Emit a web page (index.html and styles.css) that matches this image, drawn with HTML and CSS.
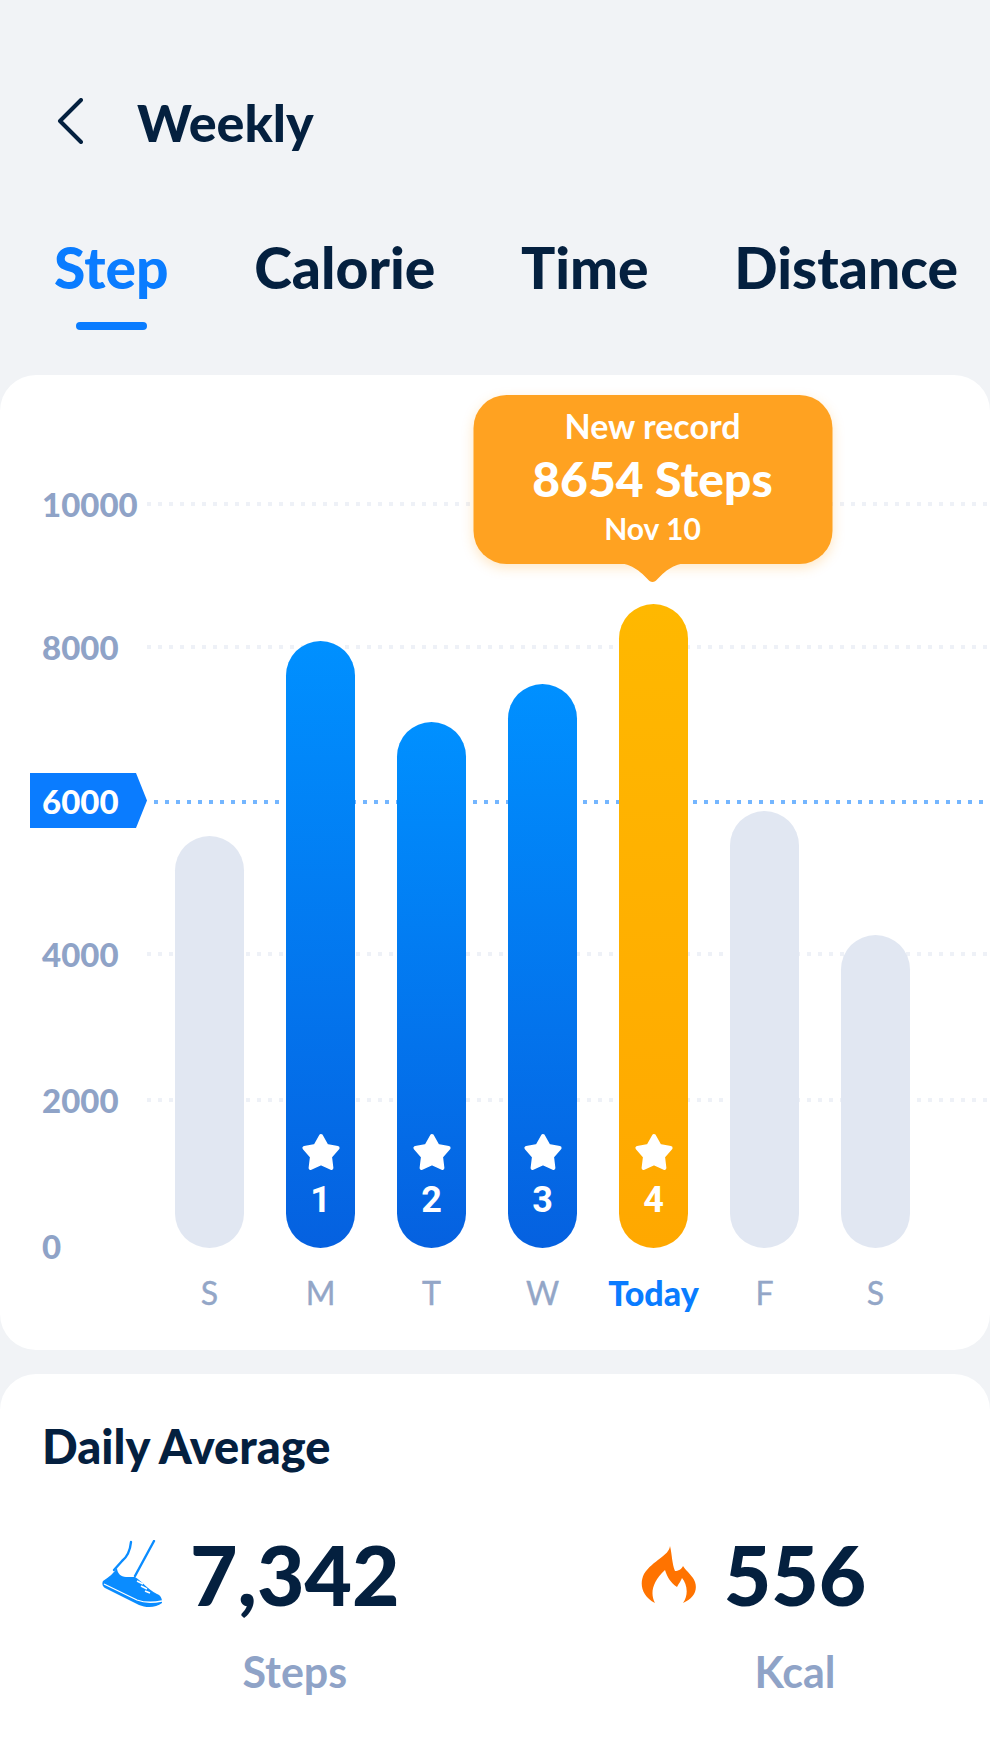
FILE: index.html
```html
<!DOCTYPE html>
<html lang="en">

<head>
    <meta charset="UTF-8">
    <title>Weekly</title>
    <link rel="stylesheet" href="styles.css">
</head>

<body>
    <div class="page">
        <div class="header">
            <svg class="back" width="26" height="46" viewBox="0 0 26 46">
                <path d="M24 2 L3 23 L24 44" fill="none" stroke="#04203f" stroke-width="4" stroke-linecap="round" stroke-linejoin="round"/>
            </svg>
            <h1>Weekly</h1>
        </div>

        <div class="tabs">
            <div class="tab active">Step<span class="tab-line"></span></div>
            <div class="tab">Calorie</div>
            <div class="tab">Time</div>
            <div class="tab">Distance</div>
        </div>

        <div class="card chart">
            <!-- grid lines sit behind the bars -->
            <div class="axis">
                <div class="tick"><span class="tick-label">10000</span><span class="tick-line"></span></div>
                <div class="tick"><span class="tick-label">8000</span><span class="tick-line"></span></div>
                <div class="tick goal"><span class="tick-label">6000</span><span class="tick-line"></span></div>
                <div class="tick"><span class="tick-label">4000</span><span class="tick-line"></span></div>
                <div class="tick"><span class="tick-label">2000</span><span class="tick-line"></span></div>
                <div class="tick"><span class="tick-label">0</span></div>
            </div>

            <div class="bars">
                <div class="bar" style="height: 412px"></div>
                <div class="bar blue" style="height: 607px">
                    <svg class="star" viewBox="0 0 40 38"><use href="#star"/></svg>
                    <span class="bar-num">1</span>
                </div>
                <div class="bar blue" style="height: 526px">
                    <svg class="star" viewBox="0 0 40 38"><use href="#star"/></svg>
                    <span class="bar-num">2</span>
                </div>
                <div class="bar blue" style="height: 564px">
                    <svg class="star" viewBox="0 0 40 38"><use href="#star"/></svg>
                    <span class="bar-num">3</span>
                </div>
                <div class="bar orange" style="height: 644px">
                    <div class="record">
                        <div class="record-title">New record</div>
                        <div class="record-value">8654 Steps</div>
                        <div class="record-date">Nov 10</div>
                        <svg class="record-tip" width="56" height="20" viewBox="0 0 56 20">
                            <path d="M0 0 H56 C48 2 44 5 38 10 L33 15 C30 19 26 19 23 15 L18 10 C12 5 8 2 0 0 Z" fill="#ffa221"/>
                        </svg>
                    </div>
                    <svg class="star" viewBox="0 0 40 38"><use href="#star"/></svg>
                    <span class="bar-num">4</span>
                </div>
                <div class="bar" style="height: 437px"></div>
                <div class="bar" style="height: 313px"></div>
            </div>

            <div class="days">
                <span>S</span>
                <span>M</span>
                <span>T</span>
                <span>W</span>
                <span class="today">Today</span>
                <span>F</span>
                <span>S</span>
            </div>
        </div>

        <div class="card average">
            <h2>Daily Average</h2>
            <div class="stats">
                <div class="stat">
                    <svg class="stat-icon" width="60" height="68" viewBox="0 0 60 68">
                        <path d="M29 2 C28 12 25 17 20 21 L12 30" fill="none" stroke="#0a8cff" stroke-width="2.4" stroke-linecap="round"/>
                        <path d="M52 1 L33 36" fill="none" stroke="#0a8cff" stroke-width="2.4" stroke-linecap="round"/>
                        <path d="M15 28 C15 33 19 37 24 37 L33 37 C40 41 45 49 55 54 C60 56 60 60 60 63 C54 68 44 68 37 65 L3 48 C0 46 0 43 1 41 C7 37 12 33 15 28 Z" fill="#0a8cff"/>
                        <path d="M2 44 L35 60 C43 63 50 63 60 61" fill="none" stroke="#fff" stroke-width="1.3"/>
                        <path d="M35 41 L41 44 M39 46 L45 49 M43 51 L48 53" fill="none" stroke="#fff" stroke-width="1.6"/>
                    </svg>
                    <div class="stat-value">7,342</div>
                    <div class="stat-label">Steps</div>
                </div>
                <div class="stat">
                    <svg class="stat-icon" width="55" height="57" viewBox="0 0 55 57">
                        <path d="M29 0 C28 10 12 14 3 28 C-2 38 1 50 14 57 C9 48 11 36 24 24 C26 31 30 37 36 41 C38 37 40 35 41 32 C46 38 48 48 42 57 C52 53 57 45 54 36 C52 30 46 26 42 20 C41 23 37 25 34 25 C31 18 31 8 29 0 Z" fill="#ff7300"/>
                    </svg>
                    <div class="stat-value">556</div>
                    <div class="stat-label">Kcal</div>
                </div>
            </div>
        </div>
    </div>

    <svg class="defs" width="0" height="0">
        <symbol id="star" viewBox="0 0 40 38">
            <polygon points="20,3 25.6,13 36.6,15 29,23.6 30.4,35 20,30.3 9.6,35 11,23.6 3.4,15 14.4,13" fill="#fff" stroke="#fff" stroke-width="4" stroke-linejoin="round"/>
        </symbol>
    </svg>
</body>

</html>
```

FILE: styles.css
```css
body {
    margin: 0;
    background: #f1f3f6;
    font-family: 'Lato', 'Noto Sans', sans-serif;
    color: #04203f;
}

.page {
    width: 990px;
    height: 1760px;
    overflow: hidden;
}

.defs {
    position: absolute;
}

/* top bar */
.header {
    display: flex;
    align-items: center;
    height: 62px;
    padding: 90px 0 0 57px;
}

.back {
    margin-right: 54px;
}

h1 {
    margin: 0;
    padding-top: 2px;
    font-size: 52px;
    line-height: 62px;
    font-weight: 900;
}

.tabs {
    display: flex;
    justify-content: space-between;
    align-items: flex-start;
    margin-top: 83px;
    padding: 0 32px 0 54px;
}

.tab {
    display: flex;
    flex-direction: column;
    align-items: center;
    font-size: 57px;
    line-height: 64px;
    font-weight: 900;
}

.tab.active {
    color: #0a7cff;
}

.tab-line {
    width: 71px;
    height: 8px;
    margin-top: 23px;
    border-radius: 4px;
    background: #0a7cff;
}

/* cards */
.card {
    position: relative;
    background: #fff;
    border-radius: 36px;
}

.chart {
    height: 975px;
    margin-top: 45px;
}

.axis {
    position: absolute;
    top: 129px;
    left: 0;
    right: 0;
    display: grid;
    grid-template-rows: 143px 155px 152px 146px 146px 0;
}

.tick {
    display: flex;
    align-items: center;
    height: 44px;
    margin-top: -22px;
    font-size: 33px;
    font-weight: 900;
    color: #8fa3c7;
}

.tick-label {
    flex: none;
    width: 105px;
    padding-left: 42px;
}

.tick-line {
    flex: 1;
    height: 4px;
    background-image: linear-gradient(90deg, #eef1f7 4px, transparent 4px);
    background-size: 11px 100%;
}

.goal {
    height: 56px;
    margin-top: -28px;
}

.goal .tick-label {
    display: flex;
    align-items: center;
    flex: none;
    height: 55px;
    margin-left: 30px;
    margin-bottom: 3px;
    padding: 0 0 0 12px;
    box-sizing: border-box;
    width: 117px;
    color: #fff;
    background: #0a7cff;
    clip-path: polygon(0 0, 106px 0, 100% 50%, 106px 100%, 0 100%);
}

.goal .tick-line {
    height: 4px;
    margin-left: 7px;
    background-image: linear-gradient(90deg, #74b6ff 4px, transparent 4px);
}

/* bars */
.bars {
    position: relative;
    display: flex;
    align-items: flex-end;
    gap: 42px;
    height: 873px;
    padding-left: 175px;
    box-sizing: border-box;
}

.bar {
    position: relative;
    display: flex;
    flex-direction: column;
    align-items: center;
    justify-content: flex-end;
    width: 69px;
    padding-bottom: 30px;
    box-sizing: border-box;
    border-radius: 35px;
    background: #e1e7f2;
}

.bar.blue {
    background: linear-gradient(#0090ff, #0561e0);
}

.bar.orange {
    background: linear-gradient(#ffb800, #ffa800);
}

.star {
    width: 40px;
    height: 38px;
    margin-bottom: 11px;
}

.bar-num {
    font-family: 'Roboto', sans-serif;
    font-size: 36px;
    line-height: 36px;
    font-weight: 700;
    color: #fff;
}

/* tooltip over today's bar */
.record {
    position: absolute;
    left: 50%;
    bottom: calc(100% + 40px);
    transform: translateX(calc(-50% - 1px));
    width: 359px;
    height: 169px;
    padding-top: 13px;
    box-sizing: border-box;
    border-radius: 33px;
    background: #ffa221;
    box-shadow: 0 4px 12px rgba(255, 162, 33, 0.25);
    color: #fff;
    text-align: center;
}

.record-title {
    font-size: 34px;
    line-height: 36px;
    font-weight: 700;
}

.record-value {
    margin-top: 4px;
    font-size: 48px;
    line-height: 62px;
    font-weight: 900;
}

.record-date {
    font-size: 30px;
    line-height: 36px;
    font-weight: 700;
}

.record-tip {
    position: absolute;
    top: 100%;
    left: 151px;
}

.days {
    display: flex;
    gap: 42px;
    margin-top: 24px;
    padding-left: 175px;
    font-size: 32px;
    line-height: 42px;
    font-weight: 400;
    color: #93a6c7;
    -webkit-text-stroke: 0.4px #93a6c7;
}

.days span {
    display: flex;
    justify-content: center;
    flex: none;
    width: 69px;
    white-space: nowrap;
}

.days .today {
    font-size: 34px;
    font-weight: 900;
    color: #0a7cff;
    -webkit-text-stroke: 0;
}

/* daily average */
.average {
    height: 420px;
    margin-top: 24px;
    padding: 47px 0 0 42px;
}

h2 {
    margin: 0;
    font-size: 47px;
    line-height: 50px;
    font-weight: 900;
}

.stats {
    display: flex;
    gap: 241px;
    margin-top: 57px;
    margin-left: 60px;
}

.stat {
    display: grid;
    grid-template-columns: auto auto;
    column-gap: 28px;
    align-items: center;
}

.stat-value {
    font-size: 82px;
    line-height: 92px;
    font-weight: 900;
}

.stat-label {
    grid-column: 2;
    margin-top: 28px;
    font-size: 43px;
    line-height: 48px;
    font-weight: 700;
    color: #8fa3c7;
    text-align: center;
}
```
